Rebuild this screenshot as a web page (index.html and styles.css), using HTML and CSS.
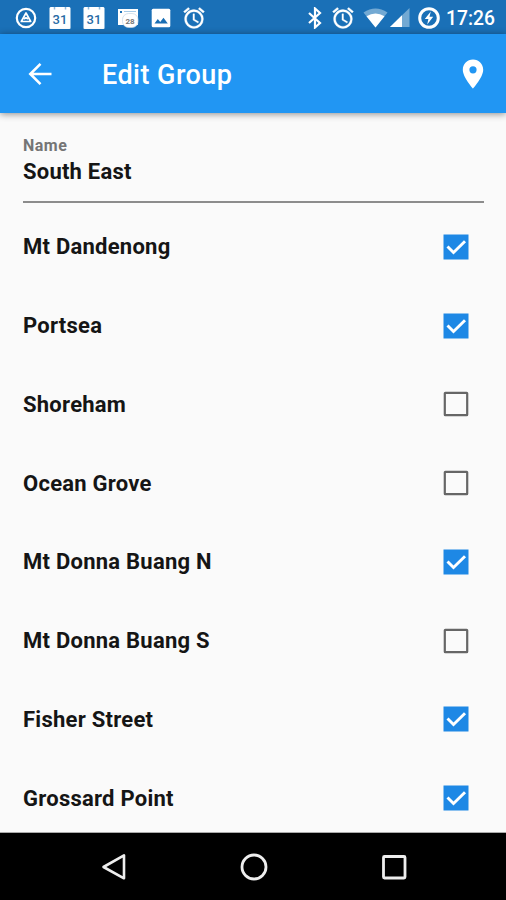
FILE: index.html
```html
<!DOCTYPE html>
<html lang="en">
<head>
<meta charset="utf-8">
<title>Edit Group</title>
<link rel="stylesheet" href="styles.css">
</head>
<body>
<svg class="defs" aria-hidden="true">
  <symbol id="alarm" viewBox="1.500 1.500 21 21"><path fill="#fff" stroke="#fff" stroke-width=".3" d="M22 5.720l-4.600-3.860-1.290 1.530 4.600 3.860L22 5.720zM7.880 3.390L6.600 1.860 2 5.710l1.290 1.530 4.590-3.850zM12.500 8H11v6l4.750 2.850.75-1.230-4-2.370V8zM12 4c-4.970 0-9 4.030-9 9s4.020 9 9 9a9 9 0 0 0 0-18zm0 16c-3.870 0-7-3.130-7-7s3.130-7 7-7 7 3.130 7 7-3.130 7-7 7z"/></symbol>
  <symbol id="on" viewBox="0 0 26 26"><path fill="#1e88e5" d="M.5.5h25v25H.5z"/><path d="M4.500 12.500l6 6L22 7.200" fill="none" stroke="#fff" stroke-width="2.900"/></symbol>
  <symbol id="off" viewBox="0 0 26 26"><rect x="1.800" y="1.800" width="22.400" height="22.400" rx=".5" fill="none" stroke="#666" stroke-width="2.200"/></symbol>
</svg>
<div class="screen">
  <div class="status">
    <div class="notifications">
      <svg width="22" height="22" viewBox="0 0 22 22"><circle cx="11" cy="11" r="9.200" fill="none" stroke="#fff" stroke-width="2.200"/><path d="M11 6l4.700 8.500H6.300zM9 12l2-1.200 2 1.200" fill="none" stroke="#fff" stroke-width="1.700" stroke-linejoin="round"/></svg>
      <svg width="22" height="24" viewBox="0 0 22 24"><path fill="#fff" d="M1.500 1h19l1 1v20.500l-1 .5h-19l-1-.5V2z"/><path d="M5.500 1v2.500M16.500 1v2.500" stroke="#8fb9db" stroke-width="1.500"/><text x="11" y="17.500" text-anchor="middle" class="cal-day">31</text></svg>
      <svg width="22" height="24" viewBox="0 0 22 24"><path fill="#fff" d="M1.500 1h19l1 1v20.500l-1 .5h-19l-1-.5V2z"/><path d="M5.500 1v2.500M16.500 1v2.500" stroke="#8fb9db" stroke-width="1.500"/><text x="11" y="17.500" text-anchor="middle" class="cal-day">31</text></svg>
      <svg width="22" height="22" viewBox="0 0 22 22"><path fill="#fff" d="M1 2h20v16H1z"/><path fill="#1a6fb5" d="M3 4h2v2H3z"/><path d="M7 4.500h12" stroke="#a5cae7"/><rect x="5.500" y="6.500" width="15.500" height="14" rx="6" fill="#fff" stroke="#c4d7e6" stroke-width=".7"/><text x="13" y="16.500" text-anchor="middle" class="small-day">28</text></svg>
      <svg width="20" height="20" viewBox="0 0 20 20"><rect x=".7" y=".7" width="18.600" height="18.600" rx="1.500" fill="#fff"/><path fill="#1a6fb5" d="M3.500 15.500l3.300-4.400 2.400 2.800 3.300-4.200 4.300 5.800z"/></svg>
      <svg width="22" height="22"><use href="#alarm"/></svg>
    </div>
    <div class="system">
      <svg width="14" height="22" viewBox="0 0 14 22"><path d="M1 6l11 10-5 4.500V1.500L12 6 1 16" fill="none" stroke="#fff" stroke-width="2.200"/></svg>
      <svg class="sys-alarm" width="22" height="22"><use href="#alarm"/></svg>
      <svg class="wifi" width="25" height="20" viewBox="0 0 25 20"><path fill="#73a9d3" d="M.5 4.500Q12.500-3.500 24.500 4.500l-12 15z"/><path fill="#fff" d="M3.500 8.300q9-5.600 18 0l-9 11.200z"/></svg>
      <svg class="signal" width="20" height="20" viewBox="0 0 20 20"><path fill="#73a9d3" d="M19.500 0v19H0z"/><path fill="#fff" d="M12 7.300V19H0z"/></svg>
      <svg class="battery" width="22" height="22" viewBox="0 0 22 22"><circle cx="11" cy="11" r="9.300" fill="none" stroke="#fff" stroke-width="3"/><path fill="#fff" d="M12.800 4.500L6.800 12h3.600l-1.200 5.500 6-7.800h-3.700z"/></svg>
      <span class="time">17:26</span>
    </div>
  </div>
  <header class="appbar">
    <svg width="24" height="24" viewBox="0 0 24 24"><path d="M23.500 12H2.500M12.500 1.800L2.300 12l10.200 10.200" fill="none" stroke="#fff" stroke-width="2.600"/></svg>
    <h1>Edit Group</h1>
    <svg class="pin" width="22" height="30" viewBox="0 0 22 30"><path fill="#fff" fill-rule="evenodd" d="M11 .5C5.200.5.800 5 .8 10.700.8 18.300 11 29.500 11 29.500s10.200-11.200 10.200-18.800C21.200 5 16.800.5 11 .5zm0 6.700a3.600 3.600 0 1 1 0 7.200 3.600 3.600 0 0 1 0-7.200z"/></svg>
  </header>
  <main>
    <div class="field"><div class="label">Name</div><div class="value">South East</div></div>
    <ul>
      <li><span>Mt Dandenong</span><svg><use href="#on"/></svg></li>
      <li><span>Portsea</span><svg><use href="#on"/></svg></li>
      <li><span>Shoreham</span><svg><use href="#off"/></svg></li>
      <li><span>Ocean Grove</span><svg><use href="#off"/></svg></li>
      <li><span>Mt Donna Buang N</span><svg><use href="#on"/></svg></li>
      <li><span>Mt Donna Buang S</span><svg><use href="#off"/></svg></li>
      <li><span>Fisher Street</span><svg><use href="#on"/></svg></li>
      <li><span>Grossard Point</span><svg><use href="#on"/></svg></li>
    </ul>
  </main>
  <nav>
    <svg width="28" height="30" viewBox="0 0 28 30"><path d="M24 3.300v23L3.500 15z" fill="none" stroke="#eee" stroke-width="2.600" stroke-linejoin="round"/></svg>
    <svg width="28" height="30" viewBox="0 0 28 30"><circle cx="14" cy="15" r="12" fill="none" stroke="#eee" stroke-width="2.800"/></svg>
    <svg width="28" height="30" viewBox="0 0 28 30"><rect x="3.500" y="4.500" width="21.500" height="21.500" rx="1" fill="none" stroke="#eee" stroke-width="2.800"/></svg>
  </nav>
</div>
</body>
</html>
```
FILE: styles.css
```css
* { box-sizing: border-box; }
body { margin: 0; font-family: Roboto, "Liberation Sans", sans-serif; }
svg { display: block; flex: none; }
.defs { width: 0; height: 0; position: absolute; }
.screen { width: 506px; height: 900px; display: flex; flex-direction: column; overflow: hidden; background: #fafafa; }
.status { height: 34px; flex: none; display: flex; justify-content: space-between; padding: 1px 11px 0 15px; background: #1a70b7; color: #fff; }
.notifications, .system { display: flex; align-items: center; }
.notifications { gap: 12px; }
.cal-day { font: 500 13px Roboto, sans-serif; fill: #286ba5; }
.small-day { font: 700 8px Roboto, sans-serif; fill: #777; }
.sys-alarm { margin-left: 10px; }
.wifi { margin-left: 9px; }
.signal { margin-left: 2px; }
.battery { margin-left: 8px; }
.time { width: 49px; margin: 1px 0 0 6px; font-size: 19.300px; font-weight: 500; white-space: nowrap; }
.appbar { height: 79px; flex: none; display: flex; align-items: center; padding: 0 22px 0 28px; background: #2196f3; color: #fff; box-shadow: 0 1px 7px rgba(0, 0, 0, .45); z-index: 1; }
h1 { margin: 3px 0 0 50px; font-size: 27px; line-height: 32px; font-weight: 500; letter-spacing: .45px; }
.pin { margin-left: auto; }
main { flex: 1; min-height: 0; overflow: hidden; border-bottom: 1px solid #aaa; }
.field { height: 90px; margin: 0 22px 0 23px; padding-top: 23px; border-bottom: 2px solid #8c8c8c; }
.label { font-size: 16px; line-height: 20px; font-weight: 700; letter-spacing: .5px; color: #757575; }
.value { font-size: 22px; line-height: 31px; font-weight: 700; letter-spacing: .22px; color: #151515; }
ul { list-style: none; margin: 4.500px 0 0; padding: 0 37px 0 23px; }
li { height: 78.750px; display: flex; align-items: center; justify-content: space-between; font-size: 22px; font-weight: 700; letter-spacing: .25px; color: #151515; }
li svg { width: 26px; height: 26px; }
nav { height: 67px; flex: none; display: flex; justify-content: center; align-items: center; gap: 112px; padding-left: 1px; background: #000; }
```
